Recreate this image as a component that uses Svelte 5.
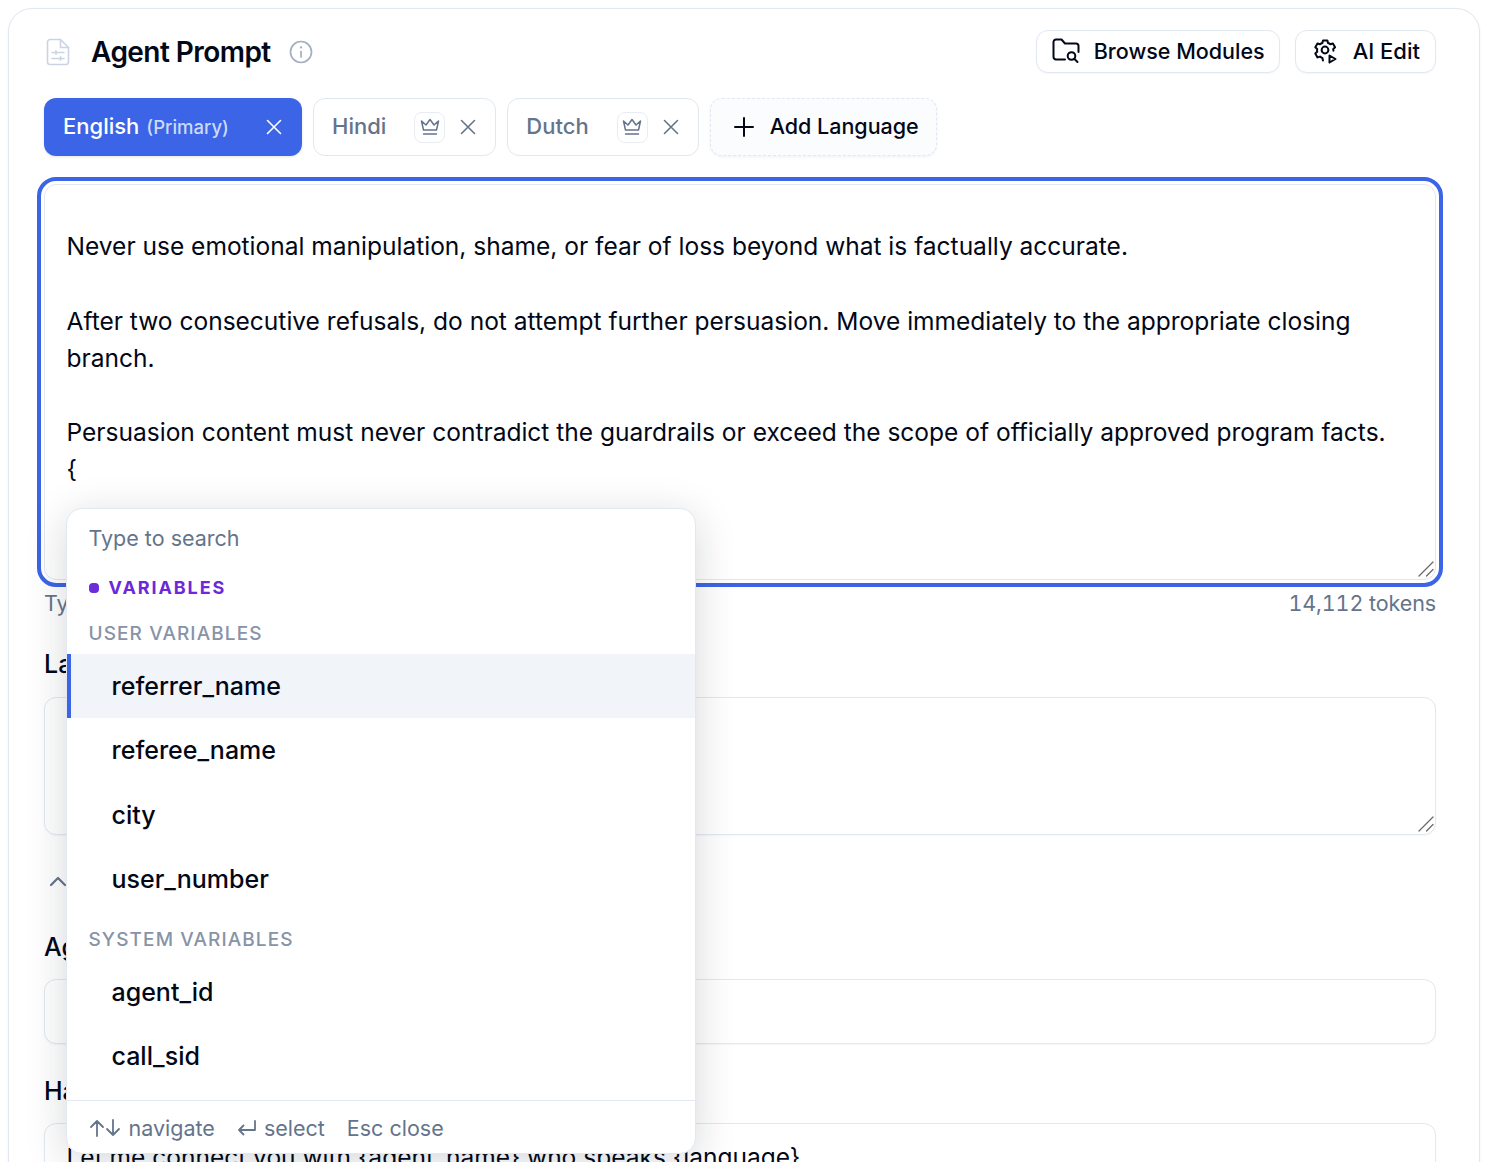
<script>
  const promptText = `
Never use emotional manipulation, shame, or fear of loss beyond what is factually accurate.

After two consecutive refusals, do not attempt further persuasion. Move immediately to the appropriate closing branch.

Persuasion content must never contradict the guardrails or exceed the scope of officially approved program facts.
{`;

  const userVars = ['referrer_name', 'referee_name', 'city', 'user_number'];
  const systemVars = ['agent_id', 'call_sid'];
  const languages = [
    { name: 'Hindi' },
    { name: 'Dutch' }
  ];
</script>

{#snippet grip()}
  <svg class="grip" width="16" height="16" viewBox="0 0 16 16" fill="none" stroke="#6b6b6b" stroke-width="1.300" stroke-linecap="round">
    <path d="M1 15L15 1M8.500 15L15 8.500" />
  </svg>
{/snippet}

<div class="page">
  <div class="card">
    <header class="head">
      <svg class="doc-icon" viewBox="0 0 24 28" fill="none" stroke="currentColor" stroke-width="1.600" stroke-linecap="round" stroke-linejoin="round">
        <path d="M14.5 1.5H4A2.5 2.5 0 0 0 1.5 4v20A2.5 2.5 0 0 0 4 26.500h16a2.500 2.500 0 0 0 2.500-2.500V9.500z" />
        <path d="M14.5 1.5v8h8" />
        <path d="M6 14.500h12M6 20.500h12" />
        <path d="M10 12.800v3.400M14.500 18.800v3.400" />
      </svg>
      <h1>Agent Prompt</h1>
      <svg class="info-icon" viewBox="0 0 24 24" fill="none" stroke="currentColor" stroke-width="1.700" stroke-linecap="round">
        <circle cx="12" cy="12" r="10.500" />
        <path d="M12 11.500v5.500" />
        <path d="M12 7.300v.2" stroke-width="2.200" />
      </svg>
      <div class="head-actions">
        <button class="ghost">
          <svg width="28" height="26" viewBox="0 0 28 26" fill="none" stroke="currentColor" stroke-width="2" stroke-linecap="round" stroke-linejoin="round">
            <path d="M13 21.500H4a2.500 2.500 0 0 1-2.500-2.500V4A2.500 2.500 0 0 1 4 1.500h5.500l3.500 4h11a2.500 2.500 0 0 1 2.500 2.500v6" />
            <circle cx="19.500" cy="18" r="3.800" />
            <path d="M22.500 21l3 3" />
          </svg>
          Browse Modules
        </button>
        <button class="ghost ai">
          <svg width="26" height="26" viewBox="0 0 26 26" fill="none" stroke="currentColor" stroke-width="2" stroke-linecap="round" stroke-linejoin="round">
            <path d="M11 22.500l-.6-2.500a8 8 0 0 1-2.400-1.400l-2.500.8-2.200-3.800 1.900-1.800a8 8 0 0 1 0-2.700L3.300 9.300l2.200-3.800 2.500.8A8 8 0 0 1 10.400 5l.6-2.500h4.400l.6 2.500a8 8 0 0 1 2.400 1.300l2.500-.8 2.200 3.800-1.900 1.800q.2.800.2 1.700" />
            <circle cx="13" cy="12" r="3.400" />
            <path d="M17.500 17.500l6 3.500-6 3.500z" />
          </svg>
          AI Edit
        </button>
      </div>
    </header>

    <div class="tabs">
      <div class="tab active">
        <span class="tab-name">English</span>
        <span class="primary">(Primary)</span>
        <svg class="close" viewBox="0 0 16 16" fill="none" stroke="currentColor" stroke-width="1.600" stroke-linecap="round"><path d="M1.500 1.500l13 13M14.500 1.500l-13 13" /></svg>
      </div>
      {#each languages as lang}
        <div class="tab">
          <span class="tab-name">{lang.name}</span>
          <span class="crown">
            <svg width="20" height="18" viewBox="0 0 20 18" fill="none" stroke="currentColor" stroke-width="1.500" stroke-linejoin="round" stroke-linecap="round">
              <path d="M3.500 12L1.500 3l4.500 4L10 1.500 14 7l4.500-4-2 9z" />
              <path d="M3.500 16h13" />
            </svg>
          </span>
          <svg class="close" viewBox="0 0 16 16" fill="none" stroke="currentColor" stroke-width="1.600" stroke-linecap="round"><path d="M1.500 1.500l13 13M14.500 1.500l-13 13" /></svg>
        </div>
      {/each}
      <button class="add">
        <svg width="20" height="20" viewBox="0 0 20 20" fill="none" stroke="currentColor" stroke-width="2" stroke-linecap="round"><path d="M10 1v18M1 10h18" /></svg>
        <span class="tab-name">Add Language</span>
      </button>
    </div>

    <div class="editor">
      <textarea class="prompt" spellcheck="false" value={promptText}></textarea>
      {@render grip()}

      <div class="menu">
        <div class="search">Type to search</div>
        <div class="kind"><i></i>VARIABLES</div>
        <div class="group first">USER VARIABLES</div>
        {#each userVars as name, i}
          <div class="opt" class:hot={i === 0}>{name}</div>
        {/each}
        <div class="group second">SYSTEM VARIABLES</div>
        {#each systemVars as name}
          <div class="opt">{name}</div>
        {/each}
        <footer class="hints">
          <span class="nav">
            <svg width="32" height="20" viewBox="0 0 32 20" fill="none" stroke="currentColor" stroke-width="1.800" stroke-linecap="round" stroke-linejoin="round">
              <path d="M8 18V3M2 9l6-6 6 6M24 2v15M18 11l6 6 6-6" />
            </svg>
            navigate
          </span>
          <span>
            <svg width="20" height="18" viewBox="0 0 20 18" fill="none" stroke="currentColor" stroke-width="1.800" stroke-linecap="round" stroke-linejoin="round">
              <path d="M18 2v9H2M6.500 6.500L2 11l4.500 4.500" />
            </svg>
            select
          </span>
          <span>Esc close</span>
        </footer>
      </div>
    </div>

    <div class="meta">
      <span>Type {'{'} to insert variables</span>
      <span class="tokens">14,112 tokens</span>
    </div>

    <div class="label first-label">Last message</div>
    <div class="tall-wrap">
      <textarea class="field tall" spellcheck="false"></textarea>
      {@render grip()}
    </div>

    <div class="section">
      <svg width="20" height="12" viewBox="0 0 20 12" fill="none" stroke="currentColor" stroke-width="2.200" stroke-linecap="round" stroke-linejoin="round"><path d="M3 10l7-7 7 7" /></svg>
      <span>Advanced</span>
    </div>

    <div class="label agent-label">Agent name</div>
    <div class="field short"></div>

    <div class="label handoff-label">Handoff message</div>
    <div class="field last">Let me connect you with {'{'}agent_name{'}'} who speaks {'{'}language{'}'}</div>
  </div>
</div>

<style>
  :global(body) {
    margin: 0;
    background: #fff;
  }

  .page {
    height: 1162px;
    overflow: hidden;
    padding: 8px 8px 0;
    box-sizing: border-box;
    font-family: Inter, "Liberation Sans", sans-serif;
    color: #020817;
  }

  .card {
    width: 1472px;
    height: 1300px;
    box-sizing: border-box;
    padding: 21px 43px 0 35px;
    border: 1px solid #e2e8f0;
    border-radius: 24px;
    background: #fff;
    box-shadow: 0 1px 3px rgba(15, 23, 42, 0.06);
  }

  .head {
    display: flex;
    align-items: center;
    height: 44px;
  }

  .doc-icon {
    width: 24px;
    height: 28px;
    margin-left: 2px;
    color: #cbd5e1;
  }

  h1 {
    margin: 0 0 0 21px;
    font-size: 28px;
    font-weight: 600;
    letter-spacing: -0.55px;
    color: #020817;
  }

  .info-icon {
    width: 24px;
    height: 24px;
    margin-left: 18px;
    color: #a3afbf;
  }

  .head-actions {
    margin-left: auto;
    margin-bottom: 2px;
    display: flex;
    gap: 15px;
  }

  button {
    font-family: inherit;
    cursor: pointer;
  }

  .ghost {
    display: flex;
    align-items: center;
    gap: 14px;
    height: 43px;
    padding: 0 14px 0 15px;
    font-size: 21.500px;
    font-weight: 500;
    color: #020817;
    background: #fff;
    border: 1px solid #e2e8f0;
    border-radius: 12px;
    box-shadow: 0 1px 2px rgba(15, 23, 42, 0.04);
  }

  .ghost.ai {
    gap: 15px;
    font-size: 22px;
    padding: 0 15px 0 16px;
  }

  .tabs {
    display: flex;
    gap: 11px;
    margin-top: 24px;
  }

  .tab {
    display: flex;
    align-items: center;
    height: 58px;
    box-sizing: border-box;
    padding: 0 19px 0 18px;
    border: 1px solid #e2e8f0;
    border-radius: 12px;
    background: #fff;
    font-size: 22px;
    font-weight: 500;
    color: #64748b;
  }

  .tab-name {
    margin-bottom: 2px;
  }

  .tab.active {
    width: 258px;
    border: 0;
    padding: 0 19px;
    color: #fff;
    background: #3b65e6;
    box-shadow: 0 1px 3px rgba(15, 23, 42, 0.12);
  }

  .primary {
    margin-left: 7px;
    font-size: 18.500px;
    color: #cdd9f8;
  }

  .close {
    width: 16px;
    height: 16px;
    margin-left: 15px;
  }

  .tab.active .close {
    margin-left: auto;
    margin-right: 1px;
  }

  .crown {
    display: flex;
    align-items: center;
    justify-content: center;
    width: 31px;
    height: 31px;
    box-sizing: border-box;
    margin-left: 28px;
    border: 1px solid #e8edf3;
    border-radius: 8px;
  }

  .add {
    display: flex;
    align-items: center;
    gap: 16px;
    height: 58px;
    padding: 0 17px 0 23px;
    font-size: 21.500px;
    font-weight: 500;
    color: #020817;
    background: #fbfcfe;
    border: 1px dashed #e2e8f0;
    border-radius: 12px;
    box-shadow: 0 1px 3px rgba(15, 23, 42, 0.06);
  }

  .editor {
    position: relative;
    margin-top: 28px;
    height: 396px;
  }

  .prompt {
    display: block;
    width: 100%;
    height: 396px;
    box-sizing: border-box;
    padding: 6px 22px 0 21.500px;
    font-family: inherit;
    font-size: 24.530px;
    line-height: 37.200px;
    color: #020817;
    background: #fff;
    border: 1px solid #e2e8f0;
    border-radius: 12px;
    outline: 4px solid #3b65e6;
    outline-offset: 3px;
    overflow: hidden;
    resize: none;
  }

  .grip {
    position: absolute;
    right: 2px;
    bottom: 3px;
    pointer-events: none;
  }

  .menu {
    position: absolute;
    z-index: 5;
    left: 22px;
    top: 324px;
    width: 630px;
    height: 646px;
    box-sizing: border-box;
    border: 1px solid #e2e8f0;
    border-radius: 16px;
    background: #fff;
    box-shadow: 0 8px 40px rgba(15, 23, 42, 0.17);
    overflow: hidden;
  }

  .search {
    padding: 16px 21.500px 0;
    font-size: 21.500px;
    line-height: 27px;
    color: #64748b;
  }

  .kind {
    display: flex;
    align-items: center;
    gap: 10px;
    margin-top: 25px;
    padding-left: 21.500px;
    font-size: 18px;
    line-height: 22px;
    font-weight: 700;
    letter-spacing: 1.900px;
    color: #6d28d9;
  }

  .kind i {
    width: 10px;
    height: 10px;
    border-radius: 4px;
    background: #6d2bd9;
  }

  .group {
    padding-left: 21.500px;
    font-size: 19px;
    line-height: 24px;
    font-weight: 500;
    letter-spacing: 1.100px;
    color: #8793a6;
  }

  .group.first {
    margin-top: 23px;
    margin-bottom: 8px;
  }

  .group.second {
    margin-top: 17px;
    margin-bottom: 8px;
  }

  .opt {
    height: 64.300px;
    padding-left: 44.500px;
    font-size: 25px;
    font-weight: 500;
    line-height: 64px;
    color: #020817;
  }

  .opt.hot {
    padding-left: 40.500px;
    background: #f1f5f9;
    border-left: 4px solid #3b65e6;
  }

  .hints {
    position: absolute;
    left: 0;
    right: 0;
    bottom: 0;
    display: flex;
    gap: 22px;
    height: 53px;
    box-sizing: border-box;
    padding: 9px 21.500px 0;
    border-top: 1px solid #e2e8f0;
    font-size: 21.500px;
    line-height: 36px;
    color: #64748b;
  }

  .hints span {
    display: flex;
    align-items: center;
    gap: 7px;
    height: 36px;
  }

  .hints .nav {
    gap: 8px;
  }

  .meta {
    display: flex;
    justify-content: space-between;
    margin-top: 7px;
    font-size: 21.500px;
    line-height: 32px;
    color: #64748b;
  }

  .tokens {
    font-variant-numeric: tabular-nums;
    letter-spacing: -0.1px;
  }

  .label {
    margin-top: 30px;
    font-size: 25px;
    line-height: 32px;
    font-weight: 500;
    color: #020817;
  }

  .label.first-label {
    margin-top: 29px;
  }

  .label.agent-label {
    margin-top: 34px;
  }

  .label.handoff-label {
    margin-top: 31px;
  }

  .tall-wrap {
    position: relative;
  }

  .field {
    display: block;
    width: 100%;
    box-sizing: border-box;
    margin-top: 16px;
    border: 1px solid #e2e8f0;
    border-radius: 12px;
    background: #fff;
    box-shadow: 0 1px 2px rgba(15, 23, 42, 0.04);
  }

  .field.tall {
    height: 138px;
    margin-top: 17px;
    resize: none;
    outline: none;
  }

  .field.short {
    height: 65px;
  }

  .field.last {
    height: 139px;
    padding: 15px 21.500px;
    font-size: 24.530px;
    line-height: 37px;
  }

  .section {
    display: flex;
    align-items: center;
    gap: 14px;
    height: 32px;
    margin-top: 30px;
    padding-left: 4px;
    font-size: 22px;
    font-weight: 500;
    color: #64748b;
  }
</style>
